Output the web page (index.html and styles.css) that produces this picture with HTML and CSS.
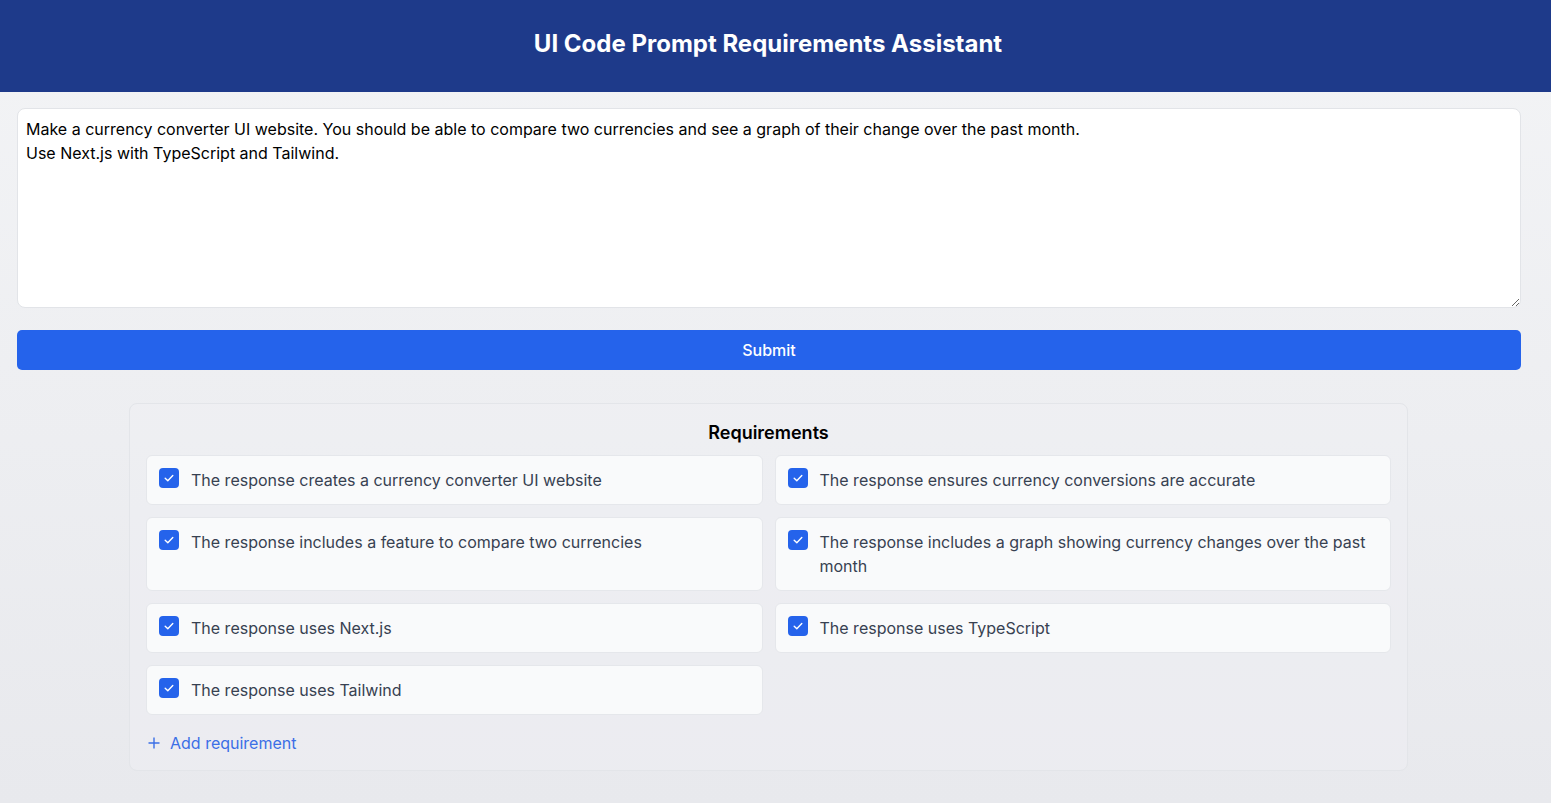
FILE: index.html
```html
<!DOCTYPE html>
<html lang="en">
<head>
<meta charset="utf-8">
<title>UI Code Prompt Requirements Assistant</title>
<link rel="stylesheet" href="styles.css">
</head>
<body>
<header class="header">
  <h1 class="title">UI Code Prompt Requirements Assistant</h1>
</header>
<main class="main">
  <textarea class="prompt">Make a currency converter UI website. You should be able to compare two currencies and see a graph of their change over the past month.
Use Next.js with TypeScript and Tailwind.</textarea>
  <button class="submit" type="button">Submit</button>
  <section class="panel">
    <h2 class="panel-title">Requirements</h2>
    <div class="grid">
      <div class="card"><span class="check"><svg viewBox="0 0 20 20" width="20" height="20"><polyline points="6.2,10.3 8.8,12.8 13.8,7.6" fill="none" stroke="#fff" stroke-width="1.4" stroke-linecap="round" stroke-linejoin="round"/></svg></span><span class="card-text">The response creates a currency converter UI website</span></div>
      <div class="card"><span class="check"><svg viewBox="0 0 20 20" width="20" height="20"><polyline points="6.2,10.3 8.8,12.8 13.8,7.6" fill="none" stroke="#fff" stroke-width="1.4" stroke-linecap="round" stroke-linejoin="round"/></svg></span><span class="card-text">The response ensures currency conversions are accurate</span></div>
      <div class="card"><span class="check"><svg viewBox="0 0 20 20" width="20" height="20"><polyline points="6.2,10.3 8.8,12.8 13.8,7.6" fill="none" stroke="#fff" stroke-width="1.4" stroke-linecap="round" stroke-linejoin="round"/></svg></span><span class="card-text">The response includes a feature to compare two currencies</span></div>
      <div class="card"><span class="check"><svg viewBox="0 0 20 20" width="20" height="20"><polyline points="6.2,10.3 8.8,12.8 13.8,7.6" fill="none" stroke="#fff" stroke-width="1.4" stroke-linecap="round" stroke-linejoin="round"/></svg></span><span class="card-text">The response includes a graph showing currency changes over the past month</span></div>
      <div class="card"><span class="check"><svg viewBox="0 0 20 20" width="20" height="20"><polyline points="6.2,10.3 8.8,12.8 13.8,7.6" fill="none" stroke="#fff" stroke-width="1.4" stroke-linecap="round" stroke-linejoin="round"/></svg></span><span class="card-text">The response uses Next.js</span></div>
      <div class="card"><span class="check"><svg viewBox="0 0 20 20" width="20" height="20"><polyline points="6.2,10.3 8.8,12.8 13.8,7.6" fill="none" stroke="#fff" stroke-width="1.4" stroke-linecap="round" stroke-linejoin="round"/></svg></span><span class="card-text">The response uses TypeScript</span></div>
      <div class="card"><span class="check"><svg viewBox="0 0 20 20" width="20" height="20"><polyline points="6.2,10.3 8.8,12.8 13.8,7.6" fill="none" stroke="#fff" stroke-width="1.4" stroke-linecap="round" stroke-linejoin="round"/></svg></span><span class="card-text">The response uses Tailwind</span></div>
    </div>
    <button class="add" type="button"><svg viewBox="0 0 12 12" width="12" height="12"><path d="M6 0.5v11M0.5 6h11" fill="none" stroke="currentColor" stroke-width="1.4"/></svg><span>Add requirement</span></button>
  </section>
</main>
</body>
</html>
```

FILE: styles.css
```css
* { box-sizing: border-box; }
html, body { margin: 0; padding: 0; }
body {
  font-family: Inter, "Noto Sans", sans-serif;
  min-height: 803px;
  background: linear-gradient(to bottom, #f3f4f6 0%, #e8e9ed 100%);
  color: #111827;
}
.header {
  background: #1e3a8a;
  height: 92px;
  padding: 28px 15px 32px 0;
  text-align: center;
}
.title {
  margin: 0;
  color: #ffffff;
  font-size: 24px;
  line-height: 32px;
  font-weight: 700;
}
.main {
  width: 1536px;
  padding: 16px 15px 32px 17px;
  display: flex;
  flex-direction: column;
}
.prompt {
  display: block;
  width: 1504px;
  height: 200px;
  margin: 0;
  padding: 8px;
  border: 1px solid #e2e4e8;
  border-radius: 8px;
  background: #fff;
  font-family: Inter, "Noto Sans", sans-serif;
  font-size: 16px;
  line-height: 24px;
  color: #000;
  resize: vertical;
  outline: none;
}
.submit {
  margin-top: 22px;
  width: 1504px;
  height: 40px;
  border: 0;
  border-radius: 5px;
  background: #2563eb;
  color: #fff;
  font-family: Inter, "Noto Sans", sans-serif;
  font-size: 16px;
  font-weight: 500;
  padding: 0;
}
.panel {
  margin: 33px 0 0 112px;
  width: 1279px;
  border: 1px solid #e3e5e9;
  border-radius: 8px;
  padding: 17px 16px 15px;
  background: rgba(240, 241, 244, 0.4);
}
.panel-title {
  margin: 0 0 10px;
  text-align: center;
  font-size: 18px;
  line-height: 24px;
  font-weight: 600;
  color: #000;
}
.grid {
  display: grid;
  grid-template-columns: 1fr 1fr;
  gap: 12px;
}
.card {
  display: flex;
  align-items: flex-start;
  gap: 12px;
  padding: 12px 11px 12px 12px;
  background: #f9fafb;
  border: 1px solid #e5e7eb;
  border-radius: 6px;
  font-size: 16px;
  line-height: 24px;
  color: #374151;
}
.check {
  flex: none;
  width: 20px;
  height: 20px;
  border-radius: 4px;
  background: #2563eb;
  display: flex;
}
.card-text { flex: 1; }
.add {
  margin-top: 16px;
  display: flex;
  align-items: center;
  gap: 10px;
  padding: 0 0 0 2px;
  border: 0;
  background: none;
  color: #3b6fe6;
  font-family: Inter, "Noto Sans", sans-serif;
  font-size: 16px;
  line-height: 24px;
}
```
